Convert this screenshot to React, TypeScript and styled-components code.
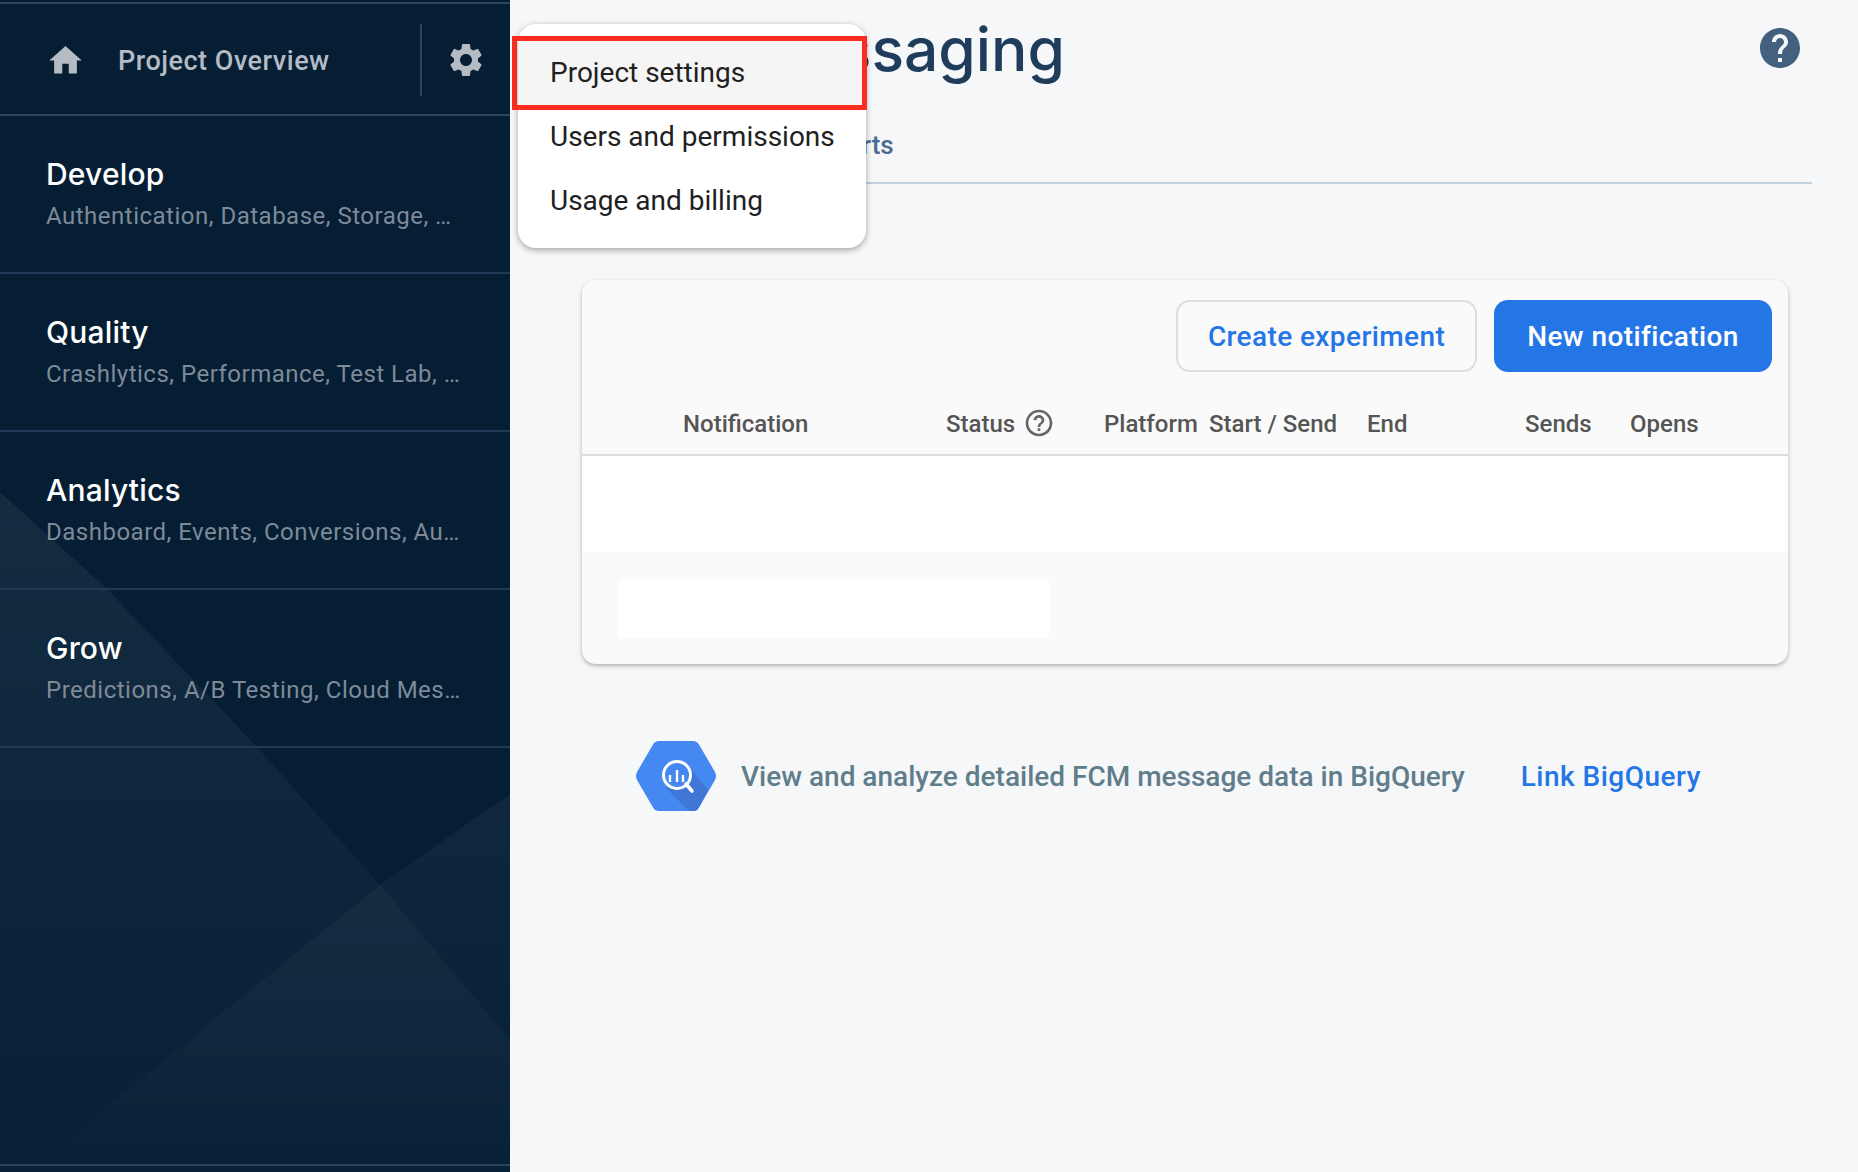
import React from 'react';
import styled, { createGlobalStyle } from 'styled-components';
import { MdHelp, MdHelpOutline, MdHome, MdSettings } from 'react-icons/md';

const GlobalStyle = createGlobalStyle`
  *, *::before, *::after {
    box-sizing: border-box;
  }
  html, body {
    margin: 0;
    height: 100%;
    background: #f6f7f9;
    font-family: Roboto, "Liberation Sans", sans-serif;
  }
`;

const Page = styled.div`
  display: grid;
  grid-template-columns: 510px 1fr;
  height: 1172px;
  overflow: hidden;
`;

const Sidebar = styled.nav`
  position: relative;
  background: #051e34;
  padding-top: 2px;
`;

const SidebarArt = styled.svg`
  position: absolute;
  top: 0;
  left: 0;
`;

const SidebarContent = styled.div`
  position: relative;
  display: flex;
  flex-direction: column;
  height: 100%;
  border-top: 2px solid #2a4563;
`;

const OverviewRow = styled.div`
  display: flex;
  align-items: center;
  height: 112px;
  padding: 2px 0 0 46px;
  border-bottom: 2px solid #2a4563;
  color: #b4bbc3;
`;

const OverviewLabel = styled.span`
  flex: 1;
  margin: 1px 0 0 33px;
  font-size: 27px;
  font-weight: 500;
  letter-spacing: 0.5px;
`;

const SettingsCell = styled.div`
  display: flex;
  align-items: center;
  justify-content: center;
  width: 90px;
  height: 72px;
  border-left: 2px solid #2a4563;
`;

const Section = styled.div`
  height: 158px;
  padding: 36px 0 0 46px;
  border-bottom: 2px solid #1f3a57;
`;

const SectionTitle = styled.div`
  font-family: Inter, Roboto, sans-serif;
  font-size: 30px;
  line-height: 44px;
  font-weight: 500;
  letter-spacing: 0.2px;
  color: #fff;
`;

const SectionSub = styled.div`
  margin-top: 2px;
  font-size: 24px;
  line-height: 36px;
  letter-spacing: 0.5px;
  color: #7e8a98;
  white-space: nowrap;
`;

const SidebarFooterLine = styled.div`
  margin-top: auto;
  margin-bottom: 6px;
  border-bottom: 2px solid #2a4563;
`;

const Main = styled.main`
  position: relative;
  padding: 0 46px 0 60px;
`;

const TitleRow = styled.div`
  display: flex;
  justify-content: space-between;
  height: 100px;
`;

const Title = styled.h1`
  margin: 10px 0 0 -8px;
  font-family: Inter, Roboto, sans-serif;
  font-size: 60.5px;
  line-height: 78px;
  font-weight: 500;
  color: #1f3c5b;
`;

const HelpButton = styled.div`
  margin: 24px 8px 0 0;
  color: #44607f;
  line-height: 0;
`;

const Tabs = styled.div`
  display: flex;
  gap: 83px;
  height: 84px;
  padding: 29px 0 0 0;
  border-bottom: 2px solid #c3d0e0;
`;

const Tab = styled.span`
  font-size: 26px;
  line-height: 32px;
  font-weight: 500;
  color: #4a6b91;
`;

const Card = styled.section`
  margin: 96px 0 0 12px;
  width: 1206px;
  border-radius: 14px;
  background: #fafafa;
  box-shadow: 0 2px 4px rgba(0, 0, 0, 0.28);
  overflow: hidden;
`;

const Toolbar = styled.div`
  display: flex;
  justify-content: flex-end;
  gap: 17px;
  padding: 20px 16px 0 0;
`;

const ToolbarButton = styled.button<{ $primary?: boolean }>`
  height: 72px;
  width: ${(p) => (p.$primary ? '278px' : '301px')};
  border-radius: 14px;
  border: ${(p) => (p.$primary ? 'none' : '2px solid #dedede')};
  background: ${(p) => (p.$primary ? '#2476e6' : 'transparent')};
  color: ${(p) => (p.$primary ? '#fff' : '#2476e6')};
  font-family: inherit;
  font-size: 28px;
  font-weight: 500;
  letter-spacing: 0.4px;
`;

const HeaderRow = styled.div`
  display: grid;
  grid-template-columns: 263px 158px 105px 158px 158px 105px 1fr;
  align-items: center;
  height: 84px;
  padding: 22px 0 0 101px;
  border-bottom: 2px solid #dedede;
  font-size: 24px;
  font-weight: 500;
  color: #555;
`;

const StatusCell = styled.span`
  display: inline-flex;
  align-items: center;
  gap: 8px;
`;

const StatusHelp = styled(MdHelpOutline)`
  margin-bottom: 2px;
  color: #666;
`;

const EmptyRow = styled.div`
  height: 96px;
  background: #fff;
`;

const CardFooter = styled.div`
  padding: 28px 36px 26px;
`;

const FooterPlaceholder = styled.div`
  width: 431px;
  height: 58px;
  background: #fff;
`;

const BigQueryRow = styled.div`
  display: flex;
  align-items: center;
  margin: 77px 0 0 66px;
  font-size: 28px;
  font-weight: 500;
`;

const BigQueryText = styled.span`
  margin-left: 25px;
  color: #607d8b;
`;

const BigQueryLink = styled.a`
  margin-left: 56px;
  letter-spacing: 0.5px;
  color: #2476e6;
`;

const SettingsMenu = styled.ul`
  position: absolute;
  top: 24px;
  left: 8px;
  width: 348px;
  margin: 0;
  padding: 17px 0 15px;
  list-style: none;
  border-radius: 18px;
  background: #fff;
  box-shadow: 0 2px 6px rgba(0, 0, 0, 0.35);
`;

const MenuItem = styled.li<{ $active?: boolean }>`
  position: relative;
  height: 64px;
  padding-left: 32px;
  font-size: 28px;
  line-height: 64px;
  color: #212121;
  background: ${(p) => (p.$active ? '#f5f5f5' : 'transparent')};
`;

const Highlight = styled.span`
  position: absolute;
  top: -5px;
  left: -6px;
  right: -1px;
  bottom: -5px;
  border: 5px solid #f92c1f;
`;

const sections = [
  { title: 'Develop', sub: 'Authentication, Database, Storage, …' },
  { title: 'Quality', sub: 'Crashlytics, Performance, Test Lab, …' },
  { title: 'Analytics', sub: 'Dashboard, Events, Conversions, Au…' },
  { title: 'Grow', sub: 'Predictions, A/B Testing, Cloud Mes…' },
];

const columns = ['Platform', 'Start / Send', 'End', 'Sends', 'Opens'];

function BigQueryIcon() {
  return (
    <svg width="80" height="70" viewBox="0 0 80 70">
      <path
        d="M1 31 L17 3.5 Q19 0 23 0 H57 Q61 0 63 3.5 L79 31 Q81 35 79 39 L63 66.5 Q61 70 57 70 H23 Q19 70 17 66.5 L1 39 Q-1 35 1 31 Z"
        fill="#4688f1"
      />
      <path d="M50 22 L72 49 L63 66.5 Q61 70 57 70 H53 L30 47 Z" fill="#4077d6" />
      <circle cx="41" cy="34" r="13.5" fill="#4688f1" stroke="#fff" strokeWidth="3" />
      <path d="M50 43 L56 50" stroke="#fff" strokeWidth="3.6" strokeLinecap="round" />
      <path d="M34 34 V41 M41 29 V41 M47 34 V41" stroke="#fff" strokeWidth="2.4" />
    </svg>
  );
}

export default function App() {
  return (
    <>
      <GlobalStyle />
      <Page>
        <Sidebar>
          <SidebarArt width="510" height="1172" viewBox="0 0 510 1172">
            <defs>
              <linearGradient id="fadeLeft" gradientUnits="userSpaceOnUse" x1="0" y1="492" x2="0" y2="1172">
                <stop offset="0" stopColor="#fff" stopOpacity="0.06" />
                <stop offset="1" stopColor="#fff" stopOpacity="0.012" />
              </linearGradient>
              <linearGradient id="fadeRight" gradientUnits="userSpaceOnUse" x1="0" y1="794" x2="0" y2="1172">
                <stop offset="0" stopColor="#fff" stopOpacity="0.045" />
                <stop offset="1" stopColor="#fff" stopOpacity="0.004" />
              </linearGradient>
            </defs>
            <polygon points="0,492 107,589 257,747 380,885 510,1040 510,1172 0,1172" fill="url(#fadeLeft)" />
            <polygon points="510,794 380,885 37,1164 30,1172 510,1172" fill="url(#fadeRight)" />
          </SidebarArt>
          <SidebarContent>
            <OverviewRow>
              <MdHome size={39} />
              <OverviewLabel>Project Overview</OverviewLabel>
              <SettingsCell>
                <MdSettings size={40} />
              </SettingsCell>
            </OverviewRow>
            {sections.map((s) => (
              <Section key={s.title}>
                <SectionTitle>{s.title}</SectionTitle>
                <SectionSub>{s.sub}</SectionSub>
              </Section>
            ))}
            <SidebarFooterLine />
          </SidebarContent>
        </Sidebar>
        <Main>
          <TitleRow>
            <Title>Cloud Messaging</Title>
            <HelpButton>
              <MdHelp size={48} />
            </HelpButton>
          </TitleRow>
          <Tabs>
            <Tab>Notifications</Tab>
            <Tab>Reports</Tab>
          </Tabs>
          <Card>
            <Toolbar>
              <ToolbarButton>Create experiment</ToolbarButton>
              <ToolbarButton $primary>New notification</ToolbarButton>
            </Toolbar>
            <HeaderRow>
              <span>Notification</span>
              <StatusCell>
                Status <StatusHelp size={32} />
              </StatusCell>
              {columns.map((c) => (
                <span key={c}>{c}</span>
              ))}
            </HeaderRow>
            <EmptyRow />
            <CardFooter>
              <FooterPlaceholder />
            </CardFooter>
          </Card>
          <BigQueryRow>
            <BigQueryIcon />
            <BigQueryText>View and analyze detailed FCM message data in BigQuery</BigQueryText>
            <BigQueryLink>Link BigQuery</BigQueryLink>
          </BigQueryRow>
          <SettingsMenu>
            <MenuItem $active>
              Project settings
              <Highlight />
            </MenuItem>
            <MenuItem>Users and permissions</MenuItem>
            <MenuItem>Usage and billing</MenuItem>
          </SettingsMenu>
        </Main>
      </Page>
    </>
  );
}
